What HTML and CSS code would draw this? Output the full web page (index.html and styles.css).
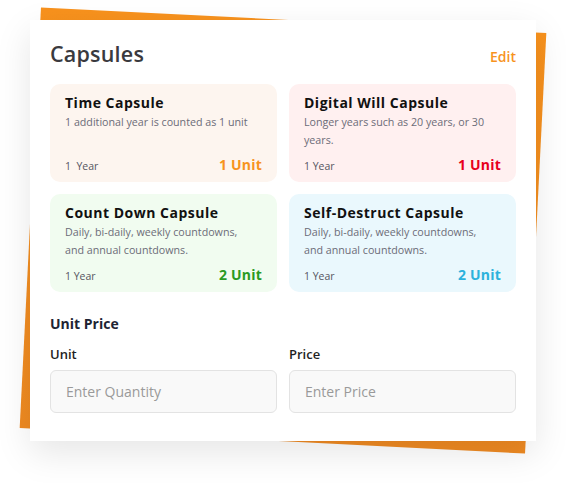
FILE: index.html
```html
<!DOCTYPE html>
<html>
<head>
<meta charset="utf-8">
<link rel="stylesheet" href="styles.css">
</head>
<body>
<div class="stage">
  <div class="backdrop"></div>
  <div class="card">
    <div class="header">
      <h1 class="title">Capsules</h1>
      <a class="edit">Edit</a>
    </div>
    <div class="grid">
      <div class="capsule c-orange">
        <div class="cap-title">Time Capsule</div>
        <div class="cap-desc">1 additional year is counted as 1 unit</div>
        <div class="cap-foot"><span class="year">1&nbsp; Year</span><span class="unit">1 Unit</span></div>
      </div>
      <div class="capsule c-red">
        <div class="cap-title">Digital Will Capsule</div>
        <div class="cap-desc">Longer years such as 20 years, or 30 years.</div>
        <div class="cap-foot"><span class="year">1 Year</span><span class="unit">1 Unit</span></div>
      </div>
      <div class="capsule c-green">
        <div class="cap-title">Count Down Capsule</div>
        <div class="cap-desc">Daily, bi-daily, weekly countdowns, and annual countdowns.</div>
        <div class="cap-foot"><span class="year">1 Year</span><span class="unit">2 Unit</span></div>
      </div>
      <div class="capsule c-blue">
        <div class="cap-title">Self-Destruct Capsule</div>
        <div class="cap-desc">Daily, bi-daily, weekly countdowns, and annual countdowns.</div>
        <div class="cap-foot"><span class="year">1 Year</span><span class="unit">2 Unit</span></div>
      </div>
    </div>
    <h2 class="section">Unit Price</h2>
    <div class="fields">
      <label class="field">
        <span class="label">Unit</span>
        <input class="input" type="text" placeholder="Enter Quantity">
      </label>
      <label class="field">
        <span class="label">Price</span>
        <input class="input" type="text" placeholder="Enter Price">
      </label>
    </div>
  </div>
</div>
</body>
</html>
```
FILE: styles.css
```css
* { box-sizing: border-box; }
html, body { margin: 0; background: #ffffff; }
body {
  font-family: "Open Sans", "Noto Sans", sans-serif;
  min-height: 483px;
  padding: 20px 0 41px 30px;
}

.stage {
  position: relative;
  width: 506px;
}

.backdrop {
  position: absolute;
  top: 0; left: 0; right: 0; bottom: 0;
  background: linear-gradient(180deg, #f8921d 0%, #ef8a22 100%);
  transform: rotate(2.9deg);
}

.card {
  position: relative;
  background: #ffffff;
  padding: 20px 20px 28px;
  box-shadow: 0 12px 34px rgba(0, 0, 0, 0.10);
}

.header {
  display: flex;
  justify-content: space-between;
  align-items: center;
  height: 28px;
}
.title {
  margin: 0;
  font-size: 21.5px;
  line-height: 28px;
  font-weight: 600;
  color: #3a3a3e;
  letter-spacing: 0.2px;
}
.edit {
  font-size: 14px;
  font-weight: 600;
  color: #f7931e;
  padding-top: 4px;
}

.grid {
  margin-top: 16px;
  display: grid;
  grid-template-columns: 1fr 1fr;
  grid-auto-rows: 98px;
  gap: 12px;
}
.capsule {
  border-radius: 10px;
  padding: 9px 15px 7px;
  display: flex;
  flex-direction: column;
}
.c-orange { background: #fdf5ef; }
.c-red { background: #fff0f0; }
.c-green { background: #f1fcf0; }
.c-blue { background: #eaf8fd; }

.cap-title {
  font-size: 14px;
  line-height: 20px;
  font-weight: 700;
  color: #111111;
  letter-spacing: 0.5px;
}
.cap-desc {
  max-width: 190px;
  font-size: 10.7px;
  line-height: 18px;
  color: #6c6c78;
}
.cap-foot {
  margin-top: auto;
  display: flex;
  justify-content: space-between;
  align-items: baseline;
}
.year {
  font-size: 10.5px;
  color: #55555f;
}
.unit {
  font-size: 14px;
  line-height: 20px;
  font-weight: 700;
  letter-spacing: 0.2px;
}
.c-orange .unit { color: #f7931e; }
.c-red .unit { color: #e8001d; }
.c-green .unit { color: #2a9a23; }
.c-blue .unit { color: #2cb2dc; }

.section {
  margin: 22px 0 0;
  font-size: 14px;
  line-height: 20px;
  font-weight: 700;
  color: #1e2433;
}
.fields {
  margin-top: 10px;
  display: grid;
  grid-template-columns: 1fr 1fr;
  gap: 12px;
}
.field {
  display: flex;
  flex-direction: column;
  gap: 6px;
}
.label {
  font-size: 13px;
  line-height: 20px;
  font-weight: 600;
  color: #1f1f23;
}
.input {
  height: 43px;
  width: 100%;
  border: 1px solid #e3e3e3;
  border-radius: 6px;
  background: #f9f9f9;
  padding: 0 15px;
  font-family: "Open Sans", "Noto Sans", sans-serif;
  font-size: 14px;
  color: #333;
  outline: none;
}
.input::placeholder { color: #9a9a9a; }
```
